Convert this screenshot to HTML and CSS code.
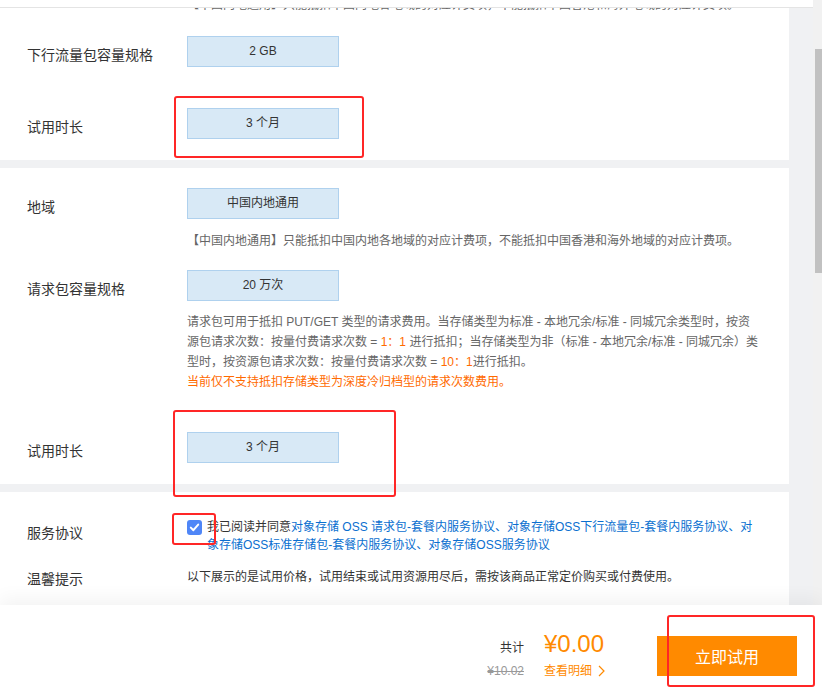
FILE: index.html
```html
<!DOCTYPE html>
<html lang="zh-CN">
<head>
<meta charset="utf-8">
<title>试用</title>
<link rel="stylesheet" href="styles.css">
</head>
<body>
<div class="page">
  <div class="viewport">
    <div class="scroll">
      <div class="topbar"></div>
      <div class="content">
        <section class="card card-first">
          <div class="row">
            <div class="label"></div>
            <div class="value"><p class="desc desc-flat">【中国内地通用】只能抵扣中国内地各地域的对应计费项，不能抵扣中国香港和海外地域的对应计费项。</p></div>
          </div>
          <div class="row gap-21">
            <div class="label">下行流量包容量规格</div>
            <div class="value"><div class="opt">2 GB</div></div>
          </div>
          <div class="row gap-41">
            <div class="label">试用时长</div>
            <div class="value"><div class="opt">3 个月</div></div>
          </div>
        </section>

        <section class="card">
          <div class="row">
            <div class="label">地域</div>
            <div class="value">
              <div class="opt">中国内地通用</div>
              <p class="desc">【中国内地通用】只能抵扣中国内地各地域的对应计费项，不能抵扣中国香港和海外地域的对应计费项。</p>
            </div>
          </div>
          <div class="row gap-19">
            <div class="label">请求包容量规格</div>
            <div class="value">
              <div class="opt">20 万次</div>
              <p class="desc desc-para">请求包可用于抵扣 PUT/GET 类型的请求费用。当存储类型为标准 - 本地冗余/标准 - 同城冗余类型时，按资源包请求次数：按量付费请求次数 = <span class="hl">1：1</span> 进行抵扣；当存储类型为非（标准 - 本地冗余/标准 - 同城冗余）类型时，按资源包请求次数：按量付费请求次数 = <span class="hl">10：1</span>进行抵扣。<br><span class="hl">当前仅不支持抵扣存储类型为深度冷归档型的请求次数费用。</span></p>
            </div>
          </div>
          <div class="row gap-40">
            <div class="label">试用时长</div>
            <div class="value"><div class="opt">3 个月</div></div>
          </div>
        </section>

        <section class="card card-last">
          <div class="row">
            <div class="label label-agree">服务协议</div>
            <div class="value agree">
              <span class="check"><svg width="15" height="15" viewBox="0 0 15 15"><path d="M3.8 7.6 L6.4 10.2 L11.2 4.6" fill="none" stroke="#fff" stroke-width="2" stroke-linecap="round" stroke-linejoin="round"/></svg></span>
              <p class="agree-text">我已阅读并同意<a class="link">对象存储 OSS 请求包-套餐内服务协议、对象存储OSS下行流量包-套餐内服务协议、对象存储OSS标准存储包-套餐内服务协议、对象存储OSS服务协议</a></p>
            </div>
          </div>
          <div class="row gap-13">
            <div class="label label-tip">温馨提示</div>
            <div class="value"><p class="tip">以下展示的是试用价格，试用结束或试用资源用尽后，需按该商品正常定价购买或付费使用。</p></div>
          </div>
        </section>
      </div>
    </div>
    <div class="scrollbar"><div class="thumb"></div></div>
  </div>

  <footer class="footer">
    <div class="price">
      <span class="total-label">共计</span>
      <span class="amount">¥0.00</span>
      <span class="old">¥10.02</span>
      <span class="detail">查看明细<svg width="7" height="12" viewBox="0 0 7 12"><polyline points="1,1 6,6 1,11" fill="none" stroke="#ff8a00" stroke-width="1.2"/></svg></span>
    </div>
    <button class="btn">立即试用</button>
  </footer>

  <div class="mark mark-a"></div>
  <div class="mark mark-b"></div>
  <div class="mark mark-c"></div>
  <div class="mark mark-d"></div>
</div>
</body>
</html>
```

FILE: styles.css
```css
* { box-sizing: border-box; }
body {
  margin: 0;
  font-family: "Liberation Sans", "Noto Sans CJK SC", sans-serif;
  color: #333;
  background: #f0f1f3;
}
p { margin: 0; }

.page {
  position: relative;
  width: 822px;
  height: 688px;
  display: flex;
  flex-direction: column;
  overflow: hidden;
}

.viewport {
  height: 605px;
  display: flex;
  flex: 0 0 605px;
}

.scroll {
  width: 813px;
  position: relative;
  overflow: hidden;
  background: #f0f1f3;
}

.topbar {
  position: absolute;
  top: 0;
  left: 0;
  right: 0;
  height: 8px;
  background: #fff;
  border-bottom: 1px solid #e4e4e4;
  z-index: 1;
}

.content {
  width: 789px;
  margin-top: -5px;
  display: flex;
  flex-direction: column;
  gap: 8px;
}

.card {
  background: #fff;
  padding: 20px 0 21px;
}
.card-first { padding-top: 0; }
.card-last { padding: 26px 0 60px; }

.row {
  display: flex;
  align-items: flex-start;
}
.gap-13 { margin-top: 13px; }
.gap-19 { margin-top: 19px; }
.gap-21 { margin-top: 21px; }
.gap-40 { margin-top: 40px; }
.gap-41 { margin-top: 41px; }

.label {
  flex: 0 0 187px;
  padding: 9px 0 0 27px;
  font-size: 14px;
  line-height: 20px;
  color: #333;
}
.label-agree { padding-top: 5px; }
.label-tip { padding-top: 2px; }

.value {
  width: 574px;
}

.opt {
  width: 152px;
  height: 31px;
  border: 1px solid #afd1ee;
  background: #d8e9f6;
  text-align: center;
  font-size: 12px;
  line-height: 29px;
  color: #333;
}

.desc {
  margin-top: 12px;
  font-size: 12px;
  line-height: 20px;
  color: #666;
}
.desc-flat { margin-top: 0; }
.desc-para { margin-top: 11px; }
.hl { color: #ff6a00; }

.agree {
  display: flex;
  align-items: flex-start;
  width: 575px;
}
.check {
  flex: 0 0 15px;
  width: 15px;
  height: 15px;
  margin: 2px 5px 0 0;
  border-radius: 3px;
  background: #4f86f7;
  display: flex;
}
.agree-text {
  width: 555px;
  font-size: 12px;
  line-height: 18px;
  color: #333;
}
.link { color: #0a6fd0; }

.tip {
  font-size: 12px;
  line-height: 20px;
  color: #333;
}

.scrollbar {
  width: 9px;
  background: #f1f1f1;
}
.thumb {
  margin: 49px 0 0 2px;
  width: 7px;
  height: 224px;
  background: #c1c1c1;
}

.footer {
  position: relative;
  height: 83px;
  background: #fff;
  display: flex;
  justify-content: flex-end;
  align-items: flex-start;
  padding-right: 25px;
  box-shadow: 0 -6px 18px rgba(0, 0, 0, 0.05);
}

.price {
  display: grid;
  grid-template-columns: auto auto;
  column-gap: 20px;
  align-items: baseline;
  margin-top: 25px;
}
.total-label {
  justify-self: end;
  font-size: 12px;
  line-height: 28px;
  color: #333;
}
.amount {
  font-size: 24px;
  line-height: 28px;
  color: #ff8a00;
}
.old {
  justify-self: end;
  font-size: 12px;
  line-height: 18px;
  color: #999;
  text-decoration: line-through;
}
.detail {
  display: flex;
  align-items: center;
  gap: 6px;
  font-size: 12px;
  line-height: 18px;
  color: #ff8a00;
}

.btn {
  margin: 31px 0 0 52px;
  width: 140px;
  height: 40px;
  border: none;
  background: #ff8a00;
  color: #fff;
  font-family: inherit;
  font-size: 16px;
  padding: 0;
}

.mark {
  position: absolute;
  border: 2px solid #ff2626;
  border-radius: 3px;
  z-index: 2;
}
.mark-a { left: 174px; top: 96px; width: 190px; height: 62px; }
.mark-b { left: 173px; top: 410px; width: 223px; height: 87px; }
.mark-c { left: 172px; top: 513px; width: 44px; height: 32px; }
.mark-d { left: 667px; top: 615px; width: 148px; height: 72px; }
```
